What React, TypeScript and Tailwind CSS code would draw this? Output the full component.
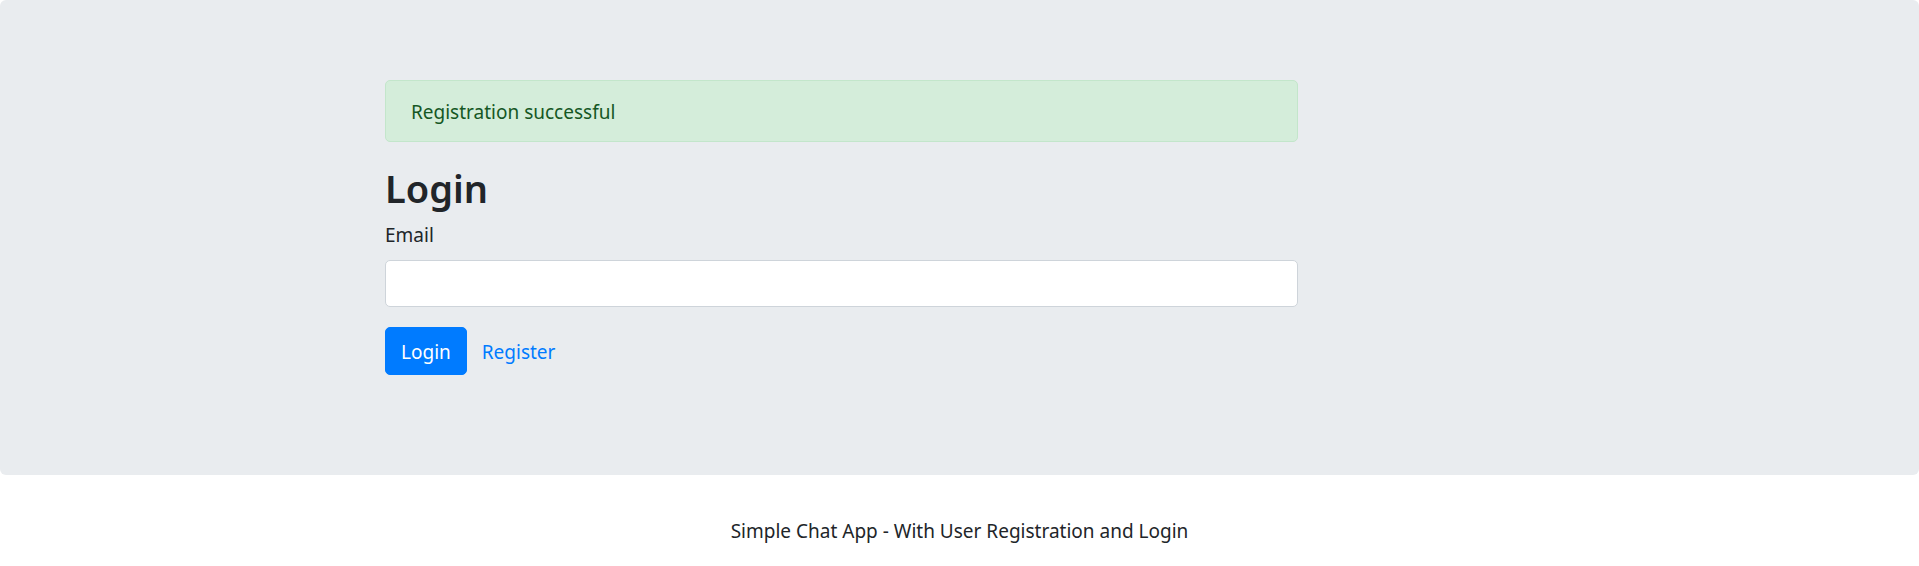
export default function App() {
  return (
    <div className="min-h-[566px] bg-white font-['Noto_Sans',sans-serif] text-[19px] leading-[30px] text-[#212529]">
      <div className="rounded-[6px] bg-[#e9ecef] pt-[80px] pb-[80px]">
        <div className="mx-auto w-[1425px] px-[19px]">
          <div className="ml-[119px] w-[913px]">
            <div className="mb-[20px] rounded-[5px] border border-[#c3e6cb] bg-[#d4edda] px-[25px] pt-[16px] pb-[14px] text-[#155724]">
              Registration successful
            </div>
            <h1 className="mb-[8px] pt-[2px] text-[38px] leading-[48px] font-semibold">Login</h1>
            <form className="mb-[20px]" onSubmit={(e) => e.preventDefault()}>
              <div className="mb-[20px]">
                <label className="mb-[10px] block">Email</label>
                <input
                  type="email"
                  className="block h-[47px] w-full rounded-[5px] border border-[#ced4da] bg-white px-[15px] outline-none"
                />
              </div>
              <div className="flex items-center">
                <button
                  type="submit"
                  className="h-[48px] rounded-[5px] border border-[#007bff] bg-[#007bff] px-[15px] pt-[1px] text-white"
                >
                  Login
                </button>
                <a href="#" className="px-[15px] pt-[1px] text-[#007bff]">
                  Register
                </a>
              </div>
            </form>
          </div>
        </div>
      </div>
      <footer className="mt-[40px] pt-[1px] text-center">Simple Chat App - With User Registration and Login</footer>
    </div>
  );
}
